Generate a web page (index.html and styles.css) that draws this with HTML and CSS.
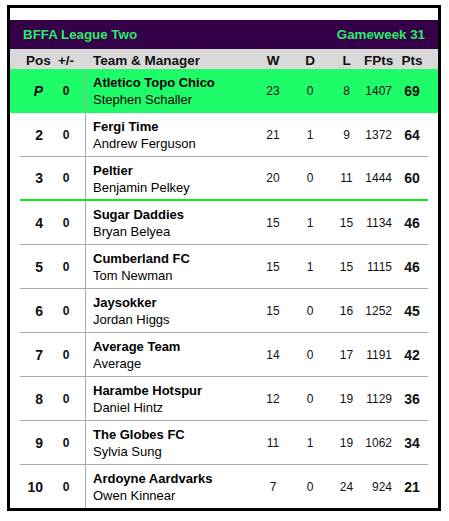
FILE: index.html
```html
<!DOCTYPE html>
<html>
<head>
<meta charset="utf-8">
<link rel="stylesheet" href="styles.css">
</head>
<body>
<div class="box">
  <div class="title">
    <span>BFFA League Two</span>
    <span>Gameweek 31</span>
  </div>
  <div class="wrap head-wrap">
    <div class="grid head">
      <div class="h-pos">Pos</div>
      <div class="h-pm">+/-</div>
      <div></div>
      <div class="h-team">Team &amp; Manager</div>
      <div class="c">W</div>
      <div class="c">D</div>
      <div class="c">L</div>
      <div class="r">FPts</div>
      <div class="c">Pts</div>
    </div>
  </div>

  <div class="wrap lead">
    <div class="grid row">
      <div class="pos promo">P</div>
      <div class="pm">0</div>
      <div></div>
      <div class="team"><b>Atletico Topo Chico</b><span>Stephen Schaller</span></div>
      <div class="num c">23</div><div class="num c">0</div><div class="num c">8</div><div class="num r">1407</div><div class="pts c">69</div>
    </div>
  </div>
  <div class="wrap">
    <div class="grid row">
      <div class="pos">2</div><div class="pm">0</div><div></div>
      <div class="team"><b>Fergi Time</b><span>Andrew Ferguson</span></div>
      <div class="num c">21</div><div class="num c">1</div><div class="num c">9</div><div class="num r">1372</div><div class="pts c">64</div>
    </div>
  </div>
  <div class="wrap">
    <div class="grid row cut">
      <div class="pos">3</div><div class="pm">0</div><div></div>
      <div class="team"><b>Peltier</b><span>Benjamin Pelkey</span></div>
      <div class="num c">20</div><div class="num c">0</div><div class="num c">11</div><div class="num r">1444</div><div class="pts c">60</div>
    </div>
  </div>
  <div class="wrap">
    <div class="grid row">
      <div class="pos">4</div><div class="pm">0</div><div></div>
      <div class="team"><b>Sugar Daddies</b><span>Bryan Belyea</span></div>
      <div class="num c">15</div><div class="num c">1</div><div class="num c">15</div><div class="num r">1134</div><div class="pts c">46</div>
    </div>
  </div>
  <div class="wrap">
    <div class="grid row">
      <div class="pos">5</div><div class="pm">0</div><div></div>
      <div class="team"><b>Cumberland FC</b><span>Tom Newman</span></div>
      <div class="num c">15</div><div class="num c">1</div><div class="num c">15</div><div class="num r">1115</div><div class="pts c">46</div>
    </div>
  </div>
  <div class="wrap">
    <div class="grid row">
      <div class="pos">6</div><div class="pm">0</div><div></div>
      <div class="team"><b>Jaysokker</b><span>Jordan Higgs</span></div>
      <div class="num c">15</div><div class="num c">0</div><div class="num c">16</div><div class="num r">1252</div><div class="pts c">45</div>
    </div>
  </div>
  <div class="wrap">
    <div class="grid row">
      <div class="pos">7</div><div class="pm">0</div><div></div>
      <div class="team"><b>Average Team</b><span>Average</span></div>
      <div class="num c">14</div><div class="num c">0</div><div class="num c">17</div><div class="num r">1191</div><div class="pts c">42</div>
    </div>
  </div>
  <div class="wrap">
    <div class="grid row">
      <div class="pos">8</div><div class="pm">0</div><div></div>
      <div class="team"><b>Harambe Hotspur</b><span>Daniel Hintz</span></div>
      <div class="num c">12</div><div class="num c">0</div><div class="num c">19</div><div class="num r">1129</div><div class="pts c">36</div>
    </div>
  </div>
  <div class="wrap">
    <div class="grid row">
      <div class="pos">9</div><div class="pm">0</div><div></div>
      <div class="team"><b>The Globes FC</b><span>Sylvia Sung</span></div>
      <div class="num c">11</div><div class="num c">1</div><div class="num c">19</div><div class="num r">1062</div><div class="pts c">34</div>
    </div>
  </div>
  <div class="wrap">
    <div class="grid row last">
      <div class="pos">10</div><div class="pm">0</div><div></div>
      <div class="team"><b>Ardoyne Aardvarks</b><span>Owen Kinnear</span></div>
      <div class="num c">7</div><div class="num c">0</div><div class="num c">24</div><div class="num r">924</div><div class="pts c">21</div>
    </div>
  </div>
</div>
</body>
</html>
```
FILE: styles.css
```css
html, body {
  margin: 0;
  padding: 0;
  background: #ffffff;
}
body {
  font-family: "Liberation Sans", Arial, sans-serif;
  color: #111;
}
.box {
  margin: 5px 0 0 7px;
  width: 428px;
  border: 3px solid #000;
  background: #fff;
}
.title {
  margin-top: 12px;
  height: 29px;
  background: #360048;
  color: #2bea6a;
  font-weight: bold;
  font-size: 13.33px;
  display: flex;
  align-items: center;
  justify-content: space-between;
  padding: 0 13px;
}
.wrap {
  padding: 0 10px;
}
.head-wrap {
  background: #d9d9d9;
}
.lead {
  background: #1ffc6a;
}
.grid {
  display: grid;
  grid-template-columns: 37px 18px 10px 170px 36px 38px 35px 32px 32px;
}
.head {
  height: 17px;
  padding-top: 3px;
  font-size: 13.5px;
  font-weight: bold;
  line-height: 17px;
  color: #111;
}
.h-pos, .h-pm { text-align: center; }
.h-team { padding-left: 8px; }
.c { text-align: center; }
.r { text-align: right; padding-right: 4px; }
.row {
  height: 43px;
  border-bottom: 1px solid #aaaaaa;
  align-items: center;
}
.lead .row { border-bottom-color: #1ffc6a; }
.row.cut {
  height: 42px;
  border-bottom: 2px solid #11ee11;
}
.row.last {
  border-bottom: none;
}
.pos {
  font-size: 14px;
  font-weight: bold;
  text-align: right;
  padding-right: 14px;
}
.promo { font-style: italic; }
.pm {
  font-size: 12px;
  font-weight: bold;
  text-align: center;
}
.team {
  align-self: stretch;
  border-left: 1px solid #aaaaaa;
  padding: 5px 0 0 7px;
  display: flex;
  flex-direction: column;
  font-size: 13px;
  line-height: 17px;
  color: #000;
}
.team span { font-weight: normal; }
.num {
  font-size: 12px;
}
.pts {
  font-size: 14px;
  font-weight: bold;
}
```
